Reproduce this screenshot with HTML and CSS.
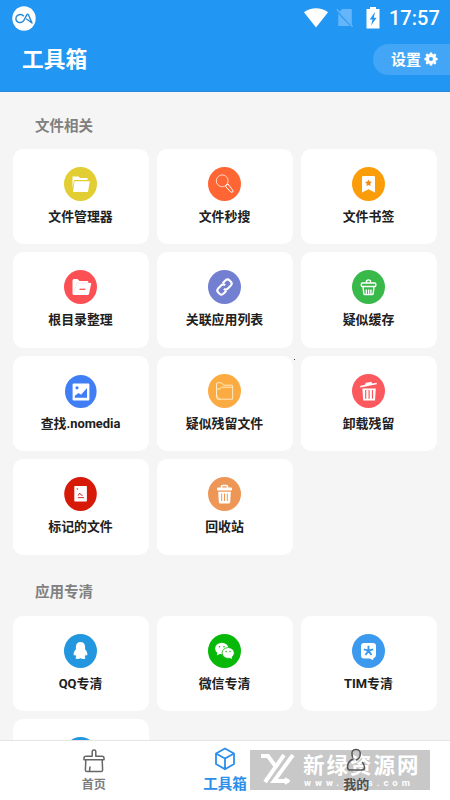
FILE: index.html
```html
<!DOCTYPE html>
<html lang="zh-CN">
<head>
<meta charset="utf-8">
<title>工具箱</title>
<link rel="stylesheet" href="styles.css">
</head>
<body>
<div class="app">
  <header class="header">
    <div class="status">
      <svg class="logo" width="24" height="25" viewBox="0 0 24 25"><ellipse cx="12" cy="12.5" rx="11.7" ry="12.2" fill="#fff"/><path d="M11.8 10.2C10.5 8.6 8 8.2 6 9.2C3.3 10.6 3.2 14.2 5.6 15.8C7.8 17.2 10.6 16.4 11.9 14.3L14.9 8.6Q15.7 7.6 16.4 8.8L20 17L14.2 12.8" fill="none" stroke="#2387d6" stroke-width="1.4" stroke-linejoin="round"/></svg>
      <svg class="wifi" width="24" height="20" viewBox="0 0 24 20"><path d="M0 4.2C7-1.2 17-1.2 24 4.2L12 19.5Z" fill="#fff"/></svg>
      <svg class="sim" width="18" height="20" viewBox="0 0 18 20"><path d="M6 1H15.8V17L3.4 4Z M2.2 5.5L14 18H2.2Z" fill="#64b5f9"/><path d="M.8 1.2L16.6 18.8" stroke="#64b5f9" stroke-width="1.3"/></svg>
      <svg class="battery" width="14" height="22" viewBox="0 0 14 22"><path d="M4 0H10V2H13.5V21.5H.5V2H4Z" fill="#fff"/><path d="M9 5L3.7 12.4H6.6L5 18.4L10.6 10.8H7.8Z" fill="#2196f3"/></svg>
      <span class="clock">17:57</span>
    </div>
    <div class="bar">
      <h1 class="title">工具箱</h1>
      <div class="settings"><span>设置</span>
        <svg width="14" height="14" viewBox="-7 -7 14 14"><g stroke="#fff" stroke-width="3" stroke-linecap="round"><path d="M0-5.3V5.3M-5.3 0H5.3M-3.8-3.8L3.8 3.8M-3.8 3.8L3.8-3.8"/></g><circle r="5" fill="#fff"/><circle r="2" fill="#43a5f5"/></svg>
      </div>
    </div>
  </header>
  <main class="content">
    <h2 class="section">文件相关</h2>
    <div class="grid">
      <div class="card"><svg class="icon" viewBox="0 0 33 34"><ellipse cx="16.5" cy="17" rx="16.5" ry="17" fill="#e2cd32"/><path d="M8.5 9.5H14.5L16 11H23.5V13H10L8.5 21Z" fill="#fff"/><path d="M10.5 14.2H25.8L24 25H9Z" fill="#fff"/></svg><span>文件管理器</span></div>
      <div class="card"><svg class="icon" viewBox="0 0 33 34"><ellipse cx="16.5" cy="17" rx="16.5" ry="17" fill="#ff6634"/><g fill="none" stroke="#ffd9c9" stroke-width="1"><circle cx="14.2" cy="13.8" r="5.9"/><path d="M18.4 17.7L20 17L25 23.5Q25.3 25.7 23 25.3L17.7 19.6Z" stroke="#fff"/></g></svg><span>文件秒搜</span></div>
      <div class="card"><svg class="icon" viewBox="0 0 33 34"><ellipse cx="16.5" cy="17" rx="16.5" ry="17" fill="#fb9c09"/><path d="M11.3 9H21.8Q23 9 23 10.2V25.5L16.5 22.3L10 25.5V10.2Q10 9 11.3 9Z" fill="#fff"/><path d="M16.5 12.5L17.5 14.6L19.9 15L18.2 16.7L18.6 19L16.5 17.9L14.4 19L14.8 16.7L13.1 15L15.5 14.6Z" fill="#f58b13"/></svg><span>文件书签</span></div>
      <div class="card"><svg class="icon" viewBox="0 0 33 34"><ellipse cx="16.5" cy="17" rx="16.5" ry="17" fill="#fd5055"/><path d="M8.5 10.5Q8.5 9 10 9H13.5L15.5 11H23.5Q24.5 11 24.5 13H27.3L25 24Q24.8 25 23.5 25H10Q8.5 25 8.5 23.5Z" fill="#fff"/><path d="M24.2 13H13L10 22" fill="none" stroke="#ffd5d8" stroke-width=".6"/><path d="M15.5 19.3H21.3" stroke="#fd5055" stroke-width="1.3"/></svg><span>根目录整理</span></div>
      <div class="card"><svg class="icon" viewBox="0 0 33 34"><ellipse cx="16.5" cy="17" rx="16.5" ry="17" fill="#737fd0"/><g fill="none" stroke="#fff" stroke-width="2.1" stroke-linejoin="round"><path d="M14.7 13.2L17.6 10.3Q19.6 8.6 21.4 10.3L22.9 11.8Q24.6 13.6 22.9 15.4L19.4 18.9Q17.6 20.3 15.9 18.7"/><path d="M18.3 20.8L15.4 23.7Q13.4 25.4 11.6 23.7L10.1 22.2Q8.4 20.4 10.1 18.6L13.6 15.1Q15.4 13.7 17.1 15.3"/></g></svg><span>关联应用列表</span></div>
      <div class="card"><svg class="icon" viewBox="0 0 33 34"><ellipse cx="16.5" cy="17" rx="16.5" ry="17" fill="#38b94a"/><g fill="none" stroke="#fff" stroke-width="1.4" stroke-linejoin="round"><rect x="9.3" y="13" width="14.5" height="3.5" rx="1"/><path d="M14.5 13V11Q16.5 8.7 18.5 11V13M11 16.8L11.8 23.5Q12 24.6 13 24.6H20Q21 24.6 21.2 23.5L22 16.8M14.3 19.5V24M16.6 19.5V24M18.9 19.5V24"/></g></svg><span>疑似缓存</span></div>
      <div class="card"><svg class="icon" viewBox="0 0 33 34"><ellipse cx="16.8" cy="17.5" rx="15.8" ry="16.5" fill="#407ef5"/><rect x="8.6" y="9.6" width="16.8" height="16.8" rx="1" fill="#fff"/><circle cx="13" cy="13.8" r="1.6" fill="#407ef5"/><path d="M10.8 23.8V21.8L14.6 19L17 20.7L23 14V23.8Z" fill="#407ef5"/></svg><span>查找.nomedia</span></div>
      <div class="card"><svg class="icon" viewBox="0 0 33 34"><ellipse cx="16.5" cy="17" rx="16.5" ry="17" fill="#fbab42"/><g fill="none" stroke="#fff0cc" stroke-width=".9" stroke-linejoin="round"><path d="M8.5 15V9.5Q8.5 8.8 9.2 8.8H13.5L15.6 11.2H24Q24.6 11.2 24.6 12V25.2H10Q8.5 25.2 8.5 23.5V15H12L13.5 13.2H24.6M8.5 15V20Q8.7 24 12 25"/></g></svg><span>疑似残留文件</span></div>
      <div class="card"><svg class="icon" viewBox="0 0 33 34"><ellipse cx="16.5" cy="17" rx="16.5" ry="17" fill="#fb595e"/><path d="M8 12L13 10.7Q13.4 8 16 8.5L19 7.7L20.3 9.5L24.7 8.7V10.3L8.3 13.6Z" fill="#fff"/><path d="M10.4 14.5H23.8L23 26.5H11.2Z" fill="#fff"/><path d="M13.7 16V24.7M17.1 16V24.7M20.5 16V24.7" stroke="#fb595e" stroke-width="1.2"/></svg><span>卸载残留</span></div>
      <div class="card"><svg class="icon" viewBox="0 0 33 34"><ellipse cx="16.5" cy="17" rx="16.3" ry="17" fill="#d71a08"/><rect x="10.3" y="9" width="12.6" height="15.5" rx=".7" fill="#fff"/><path d="M12.3 11.4L13.3 13L14.3 11.4Z" fill="#d71a08"/><path d="M14.2 18.6L15.6 16L16.7 17.6L18.6 18.6M14 20.6H20" stroke="#d71a08" fill="none" stroke-width=".9"/></svg><span>标记的文件</span></div>
      <div class="card"><svg class="icon" viewBox="0 0 33 34"><ellipse cx="16.5" cy="17" rx="16.5" ry="17" fill="#ee9655"/><path d="M13.5 11V9.5Q13.5 8.5 14.5 8.5H18.5Q19.5 8.5 19.5 9.5V11" fill="none" stroke="#fff" stroke-width="1.6"/><rect x="9" y="10.5" width="15" height="3" rx="1" fill="#fff"/><path d="M10.2 14.7H22.8L22.2 25Q22.1 26.5 20.6 26.5H12.4Q10.9 26.5 10.8 25Z" fill="#fff"/><path d="M13.7 16.5V24M16.5 16.5V24M19.3 16.5V24" stroke="#ee9655" stroke-width="1"/></svg><span>回收站</span></div>
    </div>
    <h2 class="section">应用专清</h2>
    <div class="grid">
      <div class="card"><svg class="icon" viewBox="0 0 33 34"><ellipse cx="16.5" cy="17" rx="16.5" ry="17" fill="#2296df"/><path d="M16.5 8C19.3 8 21.1 10 21.1 12.5V15.2C22.8 17 24 20 23.2 21.2C22.8 21.8 22 20.8 21.7 20.4C21.4 21.8 21 22.5 20.4 23.1C22.3 24 21.6 25 19.9 25C18.4 25 17.3 24.6 16.5 24.2C15.7 24.6 14.6 25 13.1 25C11.4 25 10.7 24 12.6 23.1C12 22.5 11.6 21.8 11.3 20.4C11 20.8 10.2 21.8 9.8 21.2C9 20 10.2 17 11.9 15.2V12.5C11.9 10 13.7 8 16.5 8Z" fill="#fff"/></svg><span>QQ专清</span></div>
      <div class="card"><svg class="icon" viewBox="0 0 33 34"><ellipse cx="16.5" cy="17" rx="16.5" ry="17" fill="#08b808"/><ellipse cx="13.8" cy="14.5" rx="6.7" ry="5.8" fill="#fff"/><path d="M9.5 18L8.8 21.5L12.7 19.5Z" fill="#fff"/><ellipse cx="20.2" cy="19" rx="6.1" ry="5.4" fill="#fff" stroke="#08b808" stroke-width=".8"/><path d="M21 23.5L24 25L23.4 22Z" fill="#fff"/><g fill="#08b808"><circle cx="11.5" cy="12.8" r=".8"/><circle cx="16" cy="12.8" r=".8"/><circle cx="18.1" cy="17.5" r=".7"/><circle cx="22" cy="17.5" r=".7"/></g></svg><span>微信专清</span></div>
      <div class="card"><svg class="icon" viewBox="0 0 33 34"><ellipse cx="16.5" cy="17" rx="16.5" ry="17" fill="#3b99ee"/><path d="M12 9H21Q24 9 24 12V20Q24 23.5 21.8 24L20.8 26L17.5 24.5H12Q9 24.5 9 21.5V12Q9 9 12 9Z" fill="#fff"/><path d="M16.5 16.6V11.8M16.5 16.6L21.2 15.4M16.5 16.6L19.5 21M16.5 16.6L13.5 21M16.5 16.6L11.8 15.4" stroke="#3b99ee" stroke-width="1.9"/></svg><span>TIM专清</span></div>
      <div class="card"><svg class="icon" viewBox="0 0 33 34"><ellipse cx="16.5" cy="17" rx="16.5" ry="17" fill="#2296df"/></svg></div>
    </div>
  </main>
  <i class="speck"></i>
  <div class="watermark">
    <svg width="36" height="32" viewBox="0 0 36 32"><g fill="none" stroke="#fff" stroke-width="4"><path d="M1 2H8L16 13M24 1L5 28M33 1L14 27H29"/><path d="M25 24L29 27L25 30" stroke-width="2"/></g></svg>
    <div class="mark"><b>新绿资源网</b><span>www.xlhs.com</span></div>
  </div>
  <nav class="nav">
    <div class="tab"><svg width="24" height="26" viewBox="0 0 24 26"><g fill="none" stroke="#666" stroke-width="1.5" stroke-linejoin="round" stroke-linecap="round"><path d="M10.2 8.2V3.6Q10.2 2 12 2T13.8 3.6V8.2H20Q22 8.2 22 10V11.8H2V10Q2 8.2 4 8.2ZM3.8 12L3.4 22Q3.4 23.6 5 23.6H19Q20.6 23.6 20.6 22L20.2 12M8 19L7.5 23.2"/></g></svg><span>首页</span></div>
    <div class="tab active"><svg width="22" height="24" viewBox="0 0 22 24"><path d="M11 1.5L20 6.5V17L11 22.3L2 17V6.5ZM2 6.5L11 11.5L20 6.5M11 11.5V22.3" fill="none" stroke="#2b8eea" stroke-width="1.8" stroke-linejoin="round"/></svg><span>工具箱</span></div>
    <div class="tab mine"><svg width="20" height="24" viewBox="0 0 20 24"><path d="M6.5 9Q4.5 1.5 10 1.5T13.8 8.5Q13 11 10.5 12M7 11Q1.5 13.5 1.5 19Q1.5 22 4 22H16Q18.5 22 18.5 19.5Q18.5 16.5 16.5 14.5" fill="none" stroke="#555" stroke-width="1.5" stroke-linecap="round"/></svg><span>我的</span></div>
  </nav>
</div>
</body>
</html>
```
FILE: styles.css
```css
* { box-sizing: border-box; }
body { margin: 0; font-family: Roboto, "Noto Sans CJK SC", sans-serif; }
.app { position: relative; z-index: 0; width: 450px; height: 800px; overflow: hidden; display: flex; flex-direction: column; background: #f5f5f5; }
.header { flex: none; height: 92px; background: #2196f3; color: #fff; border-bottom: 1px solid #2a8ada; }
.status { height: 36px; display: flex; align-items: center; padding: 0 11px 0 12px; }
.wifi { margin-left: auto; }
.sim { margin-left: 8px; }
.battery { margin-left: 12px; }
.clock { margin-left: 9px; width: 50px; font-size: 20px; font-weight: 500; line-height: 36px; }
.bar { display: flex; align-items: center; justify-content: space-between; height: 46px; padding-left: 22px; }
.title { margin: 0; padding-top: 2px; font-size: 21.7px; font-weight: 600; line-height: 32px; }
.settings { display: flex; align-items: center; gap: 3px; width: 77px; height: 31px; padding-left: 18px; border-radius: 16px 0 0 16px; background: #43a5f5; font-size: 15px; font-weight: 700; }
.settings span { margin-top: -2px; }
.content { flex: 1; min-height: 0; overflow: hidden; padding: 0 13px; }
.section { margin: 0; height: 57px; padding: 23px 0 0 22px; font-size: 14.5px; font-weight: 600; line-height: 24px; color: #808080; }
.grid + .section { height: 61px; padding-top: 26px; }
.grid { display: grid; grid-template-columns: repeat(3, 1fr); grid-auto-rows: 95.4px; gap: 8px; }
.card { display: flex; flex-direction: column; align-items: center; padding: 18px 1px 0 0; border-radius: 10px; background: #fff; color: #202020; font-size: 12.9px; font-weight: 700; white-space: nowrap; }
.card span { margin-top: 5px; line-height: 22px; }
.icon { width: 33px; height: 34px; }
.speck { position: absolute; left: 294px; top: 359px; width: 1px; height: 1px; background: #444; }
.nav { position: relative; flex: none; display: flex; height: 60px; padding: 0 28px; border-top: 1px solid #e5e5e5; background: #fff; }
/* The labels stay above the watermark, the bar background below it. */
.tab { z-index: 2; flex: 1; display: flex; flex-direction: column; align-items: center; padding-top: 7px; color: #7d7d7d; font-size: 12px; font-weight: 600; }
.nav { position: static; }
.tab span { line-height: 22px; }
.active { padding-top: 6px; color: #2b8eea; font-size: 14.5px; font-weight: 700; }
.active span { line-height: 27px; }
.mine { color: #505050; font-size: 13px; }
.mine span { line-height: 26px; }
.watermark { position: absolute; left: 250px; top: 750px; z-index: 1; display: flex; width: 180px; height: 40px; padding: 4px 0 0 10px; background: #c8c8c8; color: #fff; }
.mark { display: flex; flex-direction: column; margin-left: 7px; }
.mark b { font-size: 21.5px; line-height: 23px; letter-spacing: 2px; white-space: nowrap; }
.mark span { font-size: 9.5px; font-weight: 700; line-height: 11px; letter-spacing: 4px; margin-left: 1px; }
```
